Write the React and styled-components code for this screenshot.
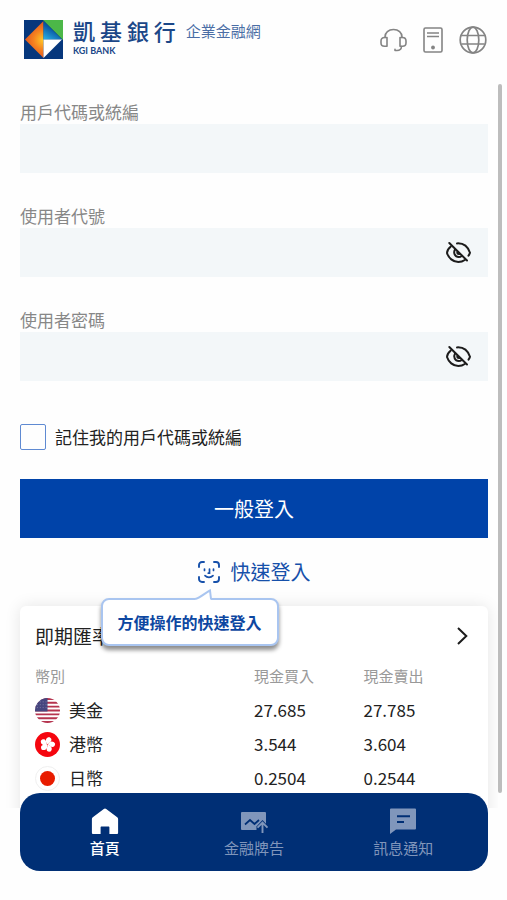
import React, { useState } from 'react';
import styled, { createGlobalStyle } from 'styled-components';

const GlobalStyle = createGlobalStyle`
  * {
    box-sizing: border-box;
  }

  body {
    margin: 0;
    background: #fefefe;
    color: #222;
    font-family: 'Noto Sans CJK TC', 'Noto Sans', sans-serif;
  }

  button, input {
    font-family: inherit;
  }
`;

const Screen = styled.div`
  display: flex;
  flex-direction: column;
  height: 100vh;
`;

const Header = styled.header`
  display: flex;
  justify-content: space-between;
  align-items: center;
  padding: 19px 20px 24px 24px;
`;

const Brand = styled.a`
  display: flex;
  align-items: center;
  gap: 10px;
  color: #1b4788;
  text-decoration: none;
`;

const BrandText = styled.div`
  display: flex;
  flex-direction: column;
`;

const BankName = styled.span`
  font-size: 22px;
  font-weight: 500;
  line-height: 22px;
`;

const BankNameEn = styled.span`
  font-family: Lato, sans-serif;
  font-size: 9px;
  font-weight: 700;
  line-height: 19px;
`;

const SiteName = styled.span`
  align-self: flex-start;
  font-size: 15px;
  line-height: 24px;
  color: #4a6da5;
`;

const HeaderActions = styled.nav`
  display: flex;
  align-items: center;
  gap: 16px;
`;

const IconButton = styled.button`
  display: flex;
  padding: 0;
  border: none;
  background: none;
  color: ${(props) => props.$color || '#848484'};
  cursor: pointer;
`;

const Main = styled.main`
  display: grid;
  grid-template-columns: 1fr 4px;
  flex: 1;
  min-height: 0;
  padding-right: 5px;
`;

const ScrollArea = styled.div`
  overflow-y: auto;
  scrollbar-width: none;
  padding: 16px 10px 0 20px;
`;

const ScrollThumb = styled.div`
  margin-bottom: 15px;
  border-radius: 2px;
  background: #bdbdbd;
`;

const Form = styled.form`
  display: flex;
  flex-direction: column;
`;

const Field = styled.div`
  display: flex;
  flex-direction: column;
  margin-bottom: 31px;
`;

const FieldLabel = styled.label`
  font-size: 17px;
  line-height: 24px;
  color: #878787;
`;

const InputBox = styled.div`
  display: flex;
  align-items: center;
  height: 49px;
  padding-right: 16px;
  background: #f3f7f9;
`;

const TextInput = styled.input`
  flex: 1;
  min-width: 0;
  height: 100%;
  padding: 0 15px;
  border: none;
  outline: none;
  background: transparent;
  font-size: 17px;
`;

const Remember = styled.label`
  display: flex;
  align-items: center;
  gap: 9px;
  margin: 12px 0 29px;
  font-size: 17px;
  line-height: 26px;
`;

const Checkbox = styled.input`
  appearance: none;
  width: 26px;
  height: 26px;
  margin: 0;
  border: 1px solid #5f8ad2;
  border-radius: 2px;

  &:checked {
    background: #0043a9;
  }
`;

const LoginButton = styled.button`
  height: 59px;
  border: none;
  background: #0043a9;
  color: #fff;
  font-size: 20px;
  cursor: pointer;
`;

const QuickLogin = styled.div`
  position: relative;
  align-self: center;
  margin: 18px 0;
`;

const QuickButton = styled.button`
  display: flex;
  align-items: center;
  gap: 11px;
  padding: 0;
  border: none;
  background: none;
  color: #1650aa;
  font-size: 20px;
  line-height: 32px;
  cursor: pointer;
`;

const Tip = styled.div`
  position: absolute;
  top: 42px;
  left: -97px;
  z-index: 1;
  padding: 0 15px;
  border: 2px solid #a9c5f0;
  border-radius: 8px;
  background: #fff;
  box-shadow: 0 4px 4px rgba(0, 0, 0, 0.45);
  color: #0d47a1;
  font-size: 16px;
  font-weight: 700;
  line-height: 44px;
  white-space: nowrap;
`;

const TipTail = styled.svg`
  position: absolute;
  top: -11px;
  left: 92px;
`;

const Card = styled.section`
  padding: 15px 15px 40px;
  border-radius: 6px;
  background: #fff;
  box-shadow: 0 0 16px rgba(0, 0, 0, 0.1);
`;

const CardHead = styled.div`
  display: flex;
  justify-content: space-between;
  align-items: center;
`;

const CardTitle = styled.h2`
  margin: 0;
  font-size: 19px;
  font-weight: 400;
  line-height: 30px;
`;

const RateTable = styled.table`
  width: 100%;
  margin-top: 8px;
  border-collapse: collapse;
  table-layout: fixed;
  text-align: left;
`;

const HeadCell = styled.th`
  width: ${(props) => props.$width};
  height: 34px;
  padding: 0;
  color: #999;
  font-size: 15px;
  font-weight: 400;
  line-height: 24px;
`;

const Cell = styled.td`
  height: 34px;
  padding: 0;
  font-size: 17px;
  line-height: 24px;
`;

const Currency = styled.div`
  display: flex;
  align-items: center;
  gap: 9px;
`;

const TabBar = styled.nav`
  position: relative;
  display: grid;
  grid-template-columns: repeat(3, 1fr);
  margin: -15px 19px 29px 20px;
  padding: 13px 10px 11px;
  border-radius: 20px;
  background: #002f75;
`;

const Tab = styled.a`
  display: flex;
  flex-direction: column;
  align-items: center;
  color: ${(props) => (props.$active ? '#fff' : '#8096bb')};
  font-size: 15px;
  font-weight: ${(props) => (props.$active ? 500 : 400)};
  line-height: 24px;
  text-decoration: none;
`;

const Logo = () => (
  <svg width="39" height="39" viewBox="0 0 39 39" aria-hidden="true">
    <defs>
      <radialGradient id="flame" gradientUnits="userSpaceOnUse" cx="19" cy="20" r="19">
        <stop offset="0" stopColor="#ffc627" />
        <stop offset="0.5" stopColor="#f58220" />
        <stop offset="1" stopColor="#e0531f" />
      </radialGradient>
      <linearGradient id="wave" x1="0" y1="1" x2="0.6" y2="0">
        <stop offset="0" stopColor="#2cb4e8" />
        <stop offset="0.6" stopColor="#0a5ba6" />
        <stop offset="1" stopColor="#06377c" />
      </linearGradient>
    </defs>
    <rect width="39" height="39" fill="#06377c" />
    <path d="M19 0h20v20z" fill="#4cb748" />
    <path d="M19.500 1L1 19.500 19.500 38z" fill="url(#flame)" />
    <path d="M19.500 1L38 19.500H19.500z" fill="url(#wave)" />
    <path d="M19.500 19.500H38L19.500 38z" fill="#fff" />
  </svg>
);

const HeadsetIcon = () => (
  <svg width="27" height="26" viewBox="0 0 27 26" fill="none" stroke="currentColor" strokeWidth="1.6" strokeLinecap="round" strokeLinejoin="round">
    <path d="M5 10.500V10C5 5.500 8.500 2.500 13.500 2.500S22 5.500 22 10v.5" />
    <path d="M7 10.500H4.500C2.200 10.500 1 12 1 14v2c0 2 1.200 3.300 3.500 3.300H7zM20 10.500h2.500c2.300 0 3.500 1.500 3.500 3.500v2c0 2-1.200 3.300-3.500 3.300H20z" />
    <path d="M21.500 19.500c-.2 2.700-2 4-4.500 4h-2v-1.300" />
  </svg>
);

const DeviceIcon = () => (
  <svg width="20" height="26" viewBox="0 0 20 26" fill="none" stroke="currentColor" strokeWidth="1.6">
    <rect x="1" y="1" width="18" height="24" rx="1.500" />
    <path d="M4 6h12M4 9.500h12" />
    <circle cx="10" cy="20.500" r="1.900" fill="currentColor" stroke="none" />
  </svg>
);

const GlobeIcon = () => (
  <svg width="28" height="28" viewBox="0 0 28 28" fill="none" stroke="currentColor" strokeWidth="1.700">
    <circle cx="14" cy="14" r="12.800" />
    <ellipse cx="14" cy="14" rx="5.800" ry="12.800" />
    <path d="M2.500 9.500h23M2.500 18h23" />
  </svg>
);

const EyeOffIcon = () => (
  <svg width="27" height="24" viewBox="0 0 27 24" fill="none" stroke="currentColor" strokeWidth="2" strokeLinecap="round">
    <path d="M4.300 2L22 19.500" />
    <path d="M5.800 5.600C3.500 7.600 2 10 2 12c1.600 5 6 9 11.300 9 2.500 0 4.700-.7 6.500-2" />
    <path d="M12 2.400c6.300-.4 11 3.500 13 9.400-.3 1-.8 2-1.500 2.900" />
    <path d="M10 8.500c-2 3.500 0 7.500 3.700 7.500 1.300 0 2.300-.4 3-1.200" />
    <path d="M12.500 10.800c-.6 1.200 0 2.200 1.600 2.300" />
  </svg>
);

const FaceIcon = () => (
  <svg width="22" height="22" viewBox="0 0 22 22" fill="none" stroke="currentColor" strokeWidth="1.900" strokeLinecap="round">
    <path d="M1 6V4a3 3 0 013-3h2M16 1h2a3 3 0 013 3v2M21 16v2a3 3 0 01-3 3h-2M6 21H4a3 3 0 01-3-3v-2" />
    <path d="M6.500 8v1.500M15.500 8v1.500M11.500 8v4.200h-1.200M7 14.700c2.200 2.200 5.800 2.200 8 0" strokeWidth="1.700" />
  </svg>
);

const ArrowIcon = () => (
  <svg width="20" height="20" viewBox="0 0 20 20" fill="none" stroke="currentColor" strokeWidth="2">
    <path d="M5 2l8.300 8L5 18" />
  </svg>
);

const UsFlag = () => (
  <svg width="25" height="25" viewBox="0 0 26 26" aria-hidden="true">
    <clipPath id="us"><circle cx="13" cy="13" r="13" /></clipPath>
    <g clipPath="url(#us)">
      <rect width="26" height="26" fill="#fff" />
      <path d="M0 1h26M0 5h26M0 9h26M0 13h26M0 17h26M0 21h26M0 25h26" stroke="#b5344f" strokeWidth="2" />
      <rect width="13" height="14" fill="#46467f" />
      <path d="M2 4h10M2 7h10M2 10h10" stroke="#7f80a8" strokeWidth="1" strokeDasharray="1 2" />
    </g>
  </svg>
);

const petals = [0, 72, 144, 216, 288];

const HkFlag = () => (
  <svg width="25" height="25" viewBox="0 0 26 26" aria-hidden="true">
    <circle cx="13" cy="13" r="13" fill="#f5060f" />
    {petals.map((angle) => (
      <path
        key={angle}
        transform={`rotate(${angle + 12} 13 13)`}
        d="M13 12.800C9.800 11 9.300 6.500 13 5c2.800.5 3.700 2.500 2.700 4.200-.8 1.300-2.200 1.800-2.700 3.600z"
        fill="#fff"
      />
    ))}
  </svg>
);

const JpFlag = () => (
  <svg width="25" height="25" viewBox="0 0 26 26" aria-hidden="true">
    <circle cx="13" cy="13" r="12.500" fill="#fff" stroke="#eee" />
    <circle cx="13" cy="13" r="7.800" fill="#e81c00" />
  </svg>
);

const HomeIcon = () => (
  <svg width="30" height="30" viewBox="0 0 30 30" fill="currentColor">
    <path d="M15 2.500c.5 0 .8.200 1.200.5l11 8.300c.6.500.9 1 .9 1.700v13.500c0 1-.5 1.500-1.500 1.500h-7.200v-6.500c0-.6-.3-1-1-1h-6.800c-.7 0-1 .4-1 1V28H3.400c-1 0-1.500-.5-1.500-1.500V13c0-.7.300-1.200.9-1.700l11-8.300c.4-.3.700-.5 1.200-.5z" />
  </svg>
);

const ChartIcon = () => (
  <svg width="30" height="30" viewBox="0 0 30 30" fill="none">
    <rect x="2" y="6" width="25" height="18" rx="1" fill="currentColor" />
    <path d="M6 18.500l5-4.500 4.500 4 4.500-4" stroke="#002f75" strokeWidth="1.700" />
    <path d="M23.500 14l-6 6.500v6h12v-6z" fill="#002f75" />
    <path d="M23.500 27v-9.500M18.500 21.700l5-5 5 5" stroke="currentColor" strokeWidth="1.900" />
  </svg>
);

const MessageIcon = () => (
  <svg width="30" height="30" viewBox="0 0 30 30" fill="none">
    <path d="M3 2.500h24a1 1 0 011 1v19a1 1 0 01-1 1H8l-6 4.500V3.500a1 1 0 011-1z" fill="currentColor" />
    <path d="M9 10.300h13M9 16h7" stroke="#002f75" strokeWidth="2" />
  </svg>
);

const rates = [
  { name: '美金', Flag: UsFlag, buy: '27.685', sell: '27.785' },
  { name: '港幣', Flag: HkFlag, buy: '3.544', sell: '3.604' },
  { name: '日幣', Flag: JpFlag, buy: '0.2504', sell: '0.2544' },
];

const tabs = [
  { id: 'home', text: '首頁', Icon: HomeIcon },
  { id: 'board', text: '金融牌告', Icon: ChartIcon },
  { id: 'messages', text: '訊息通知', Icon: MessageIcon },
];

const App = () => {
  const [company, setCompany] = useState('');
  const [user, setUser] = useState('');
  const [password, setPassword] = useState('');
  const [showUser, setShowUser] = useState(false);
  const [showPassword, setShowPassword] = useState(false);
  const [remember, setRemember] = useState(false);
  const [activeTab, setActiveTab] = useState('home');

  return (
    <Screen>
      <GlobalStyle />
      <Header>
        <Brand href="#home">
          <Logo />
          <BrandText>
            <BankName>凱 基 銀 行</BankName>
            <BankNameEn>KGI BANK</BankNameEn>
          </BrandText>
          <SiteName>企業金融網</SiteName>
        </Brand>
        <HeaderActions>
          <IconButton aria-label="客服"><HeadsetIcon /></IconButton>
          <IconButton aria-label="裝置"><DeviceIcon /></IconButton>
          <IconButton aria-label="語言"><GlobeIcon /></IconButton>
        </HeaderActions>
      </Header>

      <Main>
        <ScrollArea>
          <Form onSubmit={(e) => e.preventDefault()}>
            <Field>
              <FieldLabel htmlFor="company">用戶代碼或統編</FieldLabel>
              <InputBox>
                <TextInput id="company" value={company} onChange={(e) => setCompany(e.target.value)} />
              </InputBox>
            </Field>
            <Field>
              <FieldLabel htmlFor="user">使用者代號</FieldLabel>
              <InputBox>
                <TextInput
                  id="user"
                  type={showUser ? 'text' : 'password'}
                  value={user}
                  onChange={(e) => setUser(e.target.value)}
                />
                <IconButton type="button" $color="#1c1c1c" aria-label="顯示代號" onClick={() => setShowUser(!showUser)}>
                  <EyeOffIcon />
                </IconButton>
              </InputBox>
            </Field>
            <Field>
              <FieldLabel htmlFor="password">使用者密碼</FieldLabel>
              <InputBox>
                <TextInput
                  id="password"
                  type={showPassword ? 'text' : 'password'}
                  value={password}
                  onChange={(e) => setPassword(e.target.value)}
                />
                <IconButton type="button" $color="#1c1c1c" aria-label="顯示密碼" onClick={() => setShowPassword(!showPassword)}>
                  <EyeOffIcon />
                </IconButton>
              </InputBox>
            </Field>
            <Remember>
              <Checkbox type="checkbox" checked={remember} onChange={(e) => setRemember(e.target.checked)} />
              記住我的用戶代碼或統編
            </Remember>
            <LoginButton type="submit">一般登入</LoginButton>
            <QuickLogin>
              <QuickButton type="button">
                <FaceIcon />
                快速登入
              </QuickButton>
              <Tip role="tooltip">
                <TipTail width="18" height="12" viewBox="0 0 18 12">
                  <path d="M0 12V10L15.500 1.500V12z" fill="#fff" />
                  <path d="M0 10C5 9 10 4 15 1.500L16 10" fill="none" stroke="#a9c5f0" strokeWidth="2" />
                </TipTail>
                方便操作的快速登入
              </Tip>
            </QuickLogin>
          </Form>

          <Card>
            <CardHead>
              <CardTitle>即期匯率</CardTitle>
              <IconButton $color="#1c1c1c" aria-label="更多匯率"><ArrowIcon /></IconButton>
            </CardHead>
            <RateTable>
              <thead>
                <tr>
                  <HeadCell $width="50%">幣別</HeadCell>
                  <HeadCell $width="25%">現金買入</HeadCell>
                  <HeadCell $width="25%">現金賣出</HeadCell>
                </tr>
              </thead>
              <tbody>
                {rates.map(({ name, Flag, buy, sell }) => (
                  <tr key={name}>
                    <Cell>
                      <Currency>
                        <Flag />
                        {name}
                      </Currency>
                    </Cell>
                    <Cell>{buy}</Cell>
                    <Cell>{sell}</Cell>
                  </tr>
                ))}
              </tbody>
            </RateTable>
          </Card>
        </ScrollArea>
        <ScrollThumb />
      </Main>

      <TabBar>
        {tabs.map(({ id, text, Icon }) => (
          <Tab key={id} href={`#${id}`} $active={id === activeTab} onClick={() => setActiveTab(id)}>
            <Icon />
            {text}
          </Tab>
        ))}
      </TabBar>
    </Screen>
  );
};

export default App;
